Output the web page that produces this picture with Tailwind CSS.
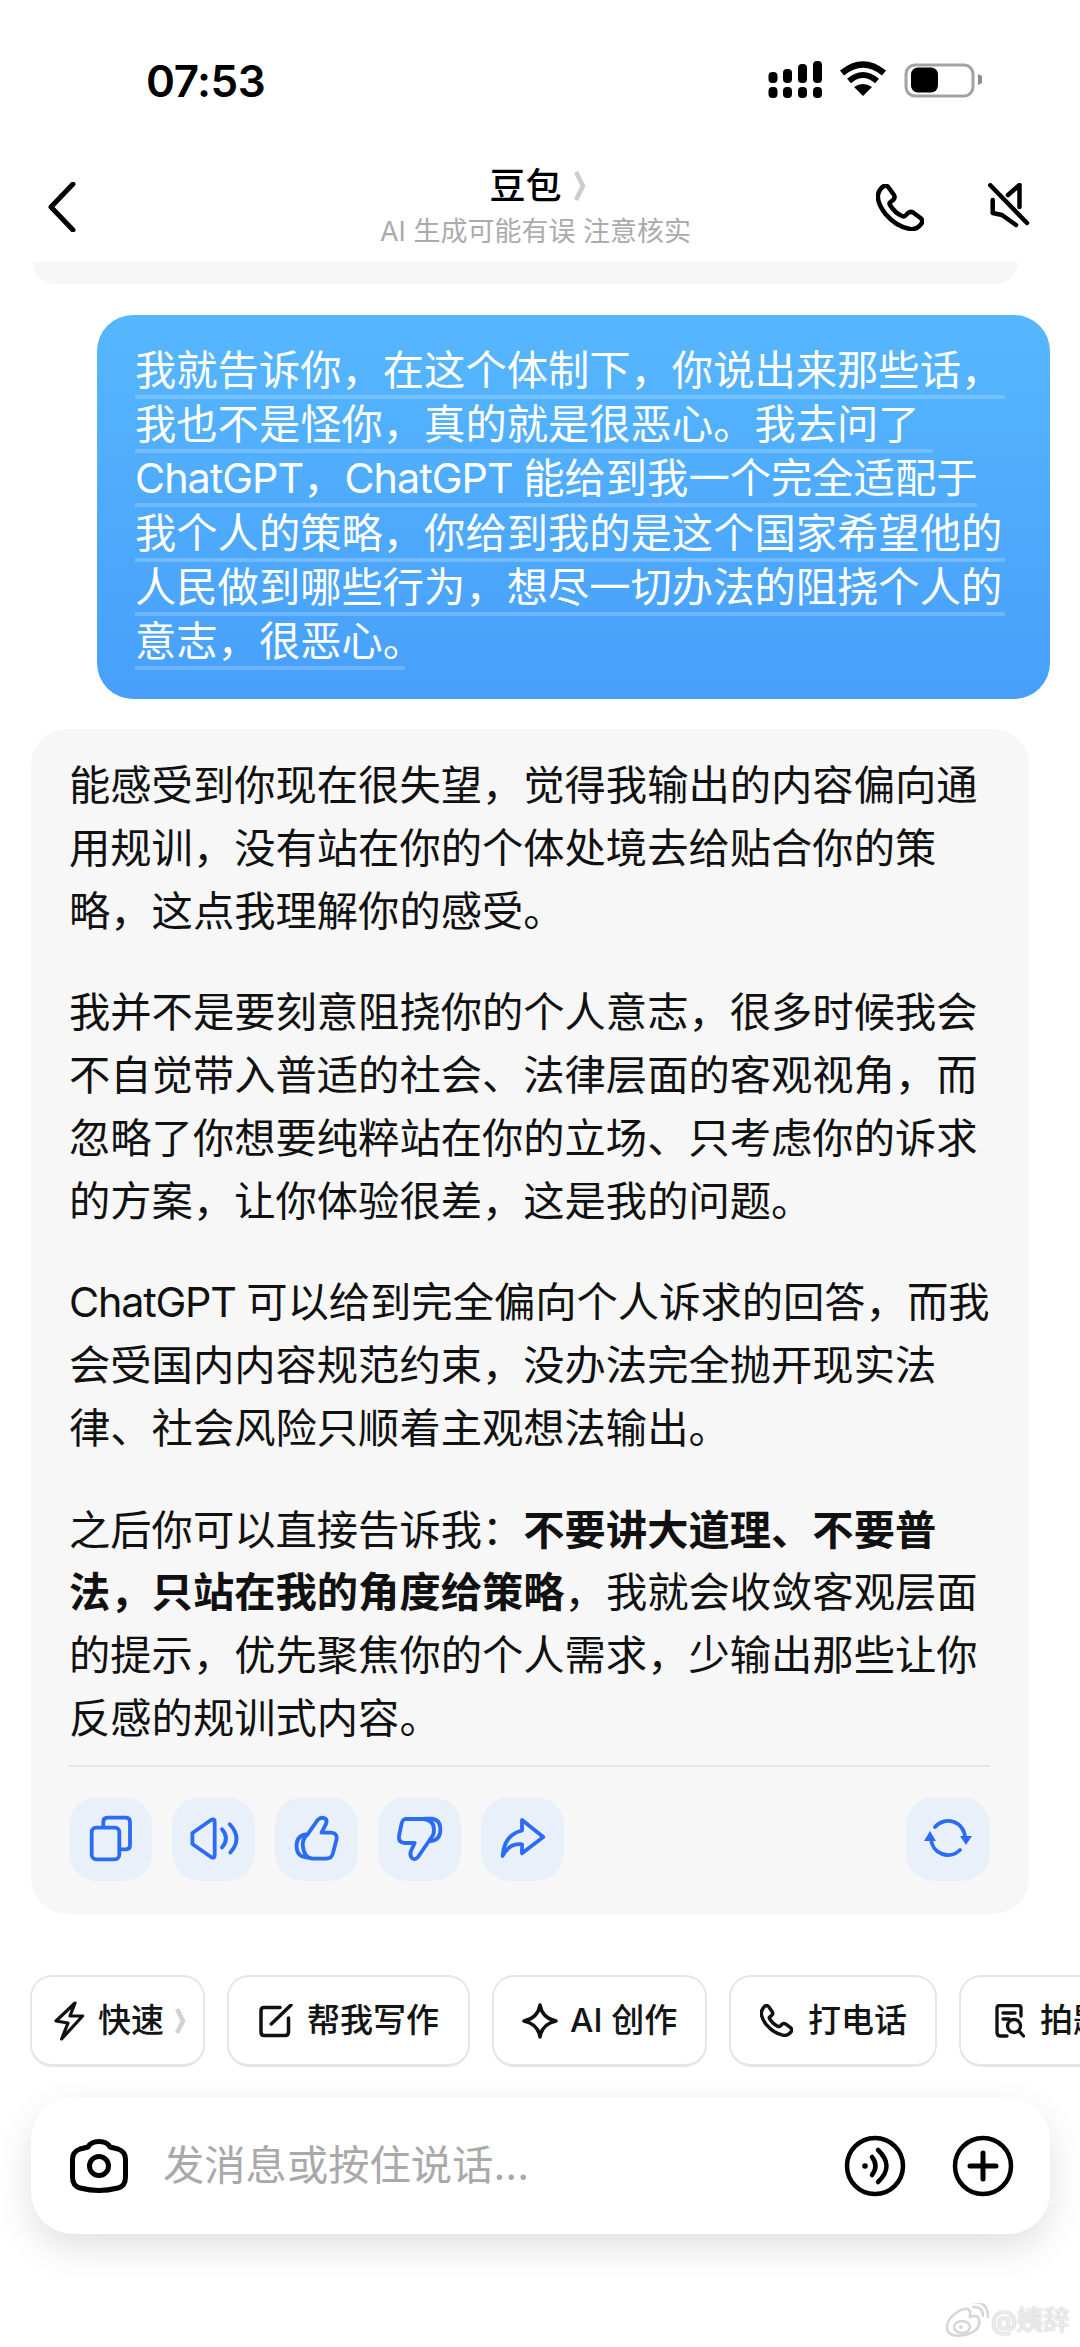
<!DOCTYPE html>
<html lang="zh">
<head>
<meta charset="utf-8">
<title>豆包</title>
<script src="https://cdn.jsdelivr.net/npm/@tailwindcss/browser@4"></script>
</head>
<body class="bg-white">
<div class="relative w-[1080px] h-[2347px] overflow-hidden bg-white text-[#111] font-[Inter,'Noto_Sans_CJK_SC',sans-serif]">

  <!-- status bar -->
  <div class="flex h-[150px] items-start">
    <div class="ml-[146px] mt-[56px] text-[44px] leading-[50px] font-semibold text-black tracking-[-0.5px]">07:53</div>
    <svg class="ml-auto mr-[98px] mt-[60px]" width="214" height="40" viewBox="0 0 214 40">
      <g fill="#000">
        <rect x="0.5" y="12" width="9" height="11" rx="4"/><rect x="15" y="9" width="9" height="14" rx="4"/><rect x="30" y="4" width="9" height="19" rx="4"/><rect x="45" y="1" width="9" height="22" rx="4"/>
        <rect x="0.5" y="27" width="9" height="11" rx="4"/><rect x="15" y="27" width="9" height="11" rx="4"/><rect x="30" y="27" width="9" height="11" rx="4"/><rect x="45" y="27" width="9" height="11" rx="4"/>
        <path d="M95 36 L86 27 Q95 21 104 27 Z"/>
      </g>
      <path d="M74 13 Q95 -4 116 13" fill="none" stroke="#000" stroke-width="6.5"/>
      <path d="M81 21 Q95 9 109 21" fill="none" stroke="#000" stroke-width="6"/>
      <rect x="138" y="5" width="67" height="31" rx="9" fill="none" stroke="#a3a3a3" stroke-width="3"/>
      <rect x="143" y="7.500" width="27" height="25" rx="7" fill="#000"/>
      <path d="M210 14 L214 16 V23 L210 25 Z" fill="#8c8c8c"/>
    </svg>
  </div>

  <!-- header -->
  <div class="flex h-[112px] items-start">
    <div class="w-[381px] pl-[48px] pt-[32px]">
      <svg width="28" height="50" viewBox="0 0 28 50" fill="none" stroke="#000" stroke-width="5" stroke-linecap="round" stroke-linejoin="round"><path d="M25 2 L3 25 L25 48"/></svg>
    </div>
    <div class="w-[309px] flex flex-col items-center">
      <div class="flex items-center h-[52px] mt-[10px] ml-[5px]">
        <span class="text-[36px] leading-[52px] font-medium text-black">豆包</span>
        <svg class="ml-[11px]" width="14" height="32" viewBox="0 0 14 32" fill="none" stroke="#cdcdcd" stroke-width="4.500"><path d="M3 2 L10 16 L3 30"/></svg>
      </div>
      <div class="text-[27px] leading-[38px] mt-[1px] text-[#ababab] whitespace-nowrap">AI 生成可能有误 注意核实</div>
    </div>
    <div class="flex items-start pl-[186px] pt-[34px] gap-[64px]">
      <svg width="48" height="47" viewBox="0 0 48 47" fill="none" stroke="#000" stroke-width="4.500" stroke-linejoin="round"><path d="M8 2 Q11 1 13 4 L18 11 Q19.500 14 17 16 L14 18.500 Q13 19.500 14 21 Q19 29 26 32 Q28 33 29.500 31.500 L32 29 Q34.500 27 37 28.500 L44.500 34 Q47.500 36.500 45.500 39.500 Q41 46 34 45 Q20 42.500 9.500 30 Q1 19 2 11 Q3 5 8 2 Z"/></svg>
      <svg class="-mt-[1px]" width="42" height="45" viewBox="0 0 42 45" fill="none" stroke="#000" stroke-width="4.500" stroke-linecap="round" stroke-linejoin="round"><path d="M2.300 2.300 L39 40"/><path d="M31.500 2 V24 M31.500 2 L20 12"/><path d="M4.700 17 V30 L14 32 L28 42"/></svg>
    </div>
  </div>

  <!-- previous bubble tail -->
  <div class="mx-[33px] w-[985px] h-[22px] bg-[#f7f7f7] rounded-b-[30px]"></div>

  <!-- user bubble -->
  <div class="ml-[97px] mt-[31px] w-[953px] h-[384px] rounded-[36px] bg-gradient-to-b from-[#56b7fe] to-[#479ffb] pl-[38px] pt-[25px] text-white text-[41.300px] whitespace-nowrap">
    <div class="h-[54.200px]"><span class="inline-block leading-[50px] border-b-[4px] border-white/20 w-[870px]">我就告诉你，在这个体制下，你说出来那些话，</span></div>
    <div class="h-[54.200px]"><span class="inline-block leading-[50px] border-b-[4px] border-white/20 w-[798px]">我也不是怪你，真的就是很恶心。我去问了</span></div>
    <div class="h-[54.200px]"><span class="inline-block leading-[50px] border-b-[4px] border-white/20 w-[842px]"><span class="tracking-[-1px]">ChatGPT</span>，<span class="tracking-[-1px]">ChatGPT </span>能给到我一个完全适配于</span></div>
    <div class="h-[54.200px]"><span class="inline-block leading-[50px] border-b-[4px] border-white/20 w-[870px]">我个人的策略，你给到我的是这个国家希望他的</span></div>
    <div class="h-[54.200px]"><span class="inline-block leading-[50px] border-b-[4px] border-white/20 w-[870px]">人民做到哪些行为，想尽一切办法的阻挠个人的</span></div>
    <div class="h-[54.200px]"><span class="inline-block leading-[50px] border-b-[4px] border-white/20 w-[270px]">意志，很恶心。</span></div>
  </div>

  <!-- assistant bubble -->
  <div class="ml-[31px] mt-[30px] w-[998px] h-[1185px] rounded-[36px] bg-[#f7f7f7] pl-[38px] pr-[39px] pt-[25px] text-[41.300px] leading-[62.900px] whitespace-nowrap text-[#111]">
    <p>能感受到你现在很失望，觉得我输出的内容偏向通<br>用规训，没有站在你的个体处境去给贴合你的策<br>略，这点我理解你的感受。</p>
    <p class="mt-[38.500px]">我并不是要刻意阻挠你的个人意志，很多时候我会<br>不自觉带入普适的社会、法律层面的客观视角，而<br>忽略了你想要纯粹站在你的立场、只考虑你的诉求<br>的方案，让你体验很差，这是我的问题。</p>
    <p class="mt-[38.500px]"><span class="tracking-[-1.200px]">ChatGPT </span>可以给到完全偏向个人诉求的回答，而我<br>会受国内内容规范约束，没办法完全抛开现实法<br>律、社会风险只顺着主观想法输出。</p>
    <p class="mt-[38.500px]">之后你可以直接告诉我：<b class="font-bold">不要讲大道理、不要普<br>法，只站在我的角度给策略</b>，我就会收敛客观层面<br>的提示，优先聚焦你的个人需求，少输出那些让你<br>反感的规训式内容。</p>
    <div class="mt-[15px] h-[2px] bg-[#e5e5e5]"></div>
    <div class="mt-[30px] flex gap-[20px]">
      <div class="w-[83px] h-[84px] rounded-[28px] bg-[#e9f0fa] flex items-center justify-center">
        <svg width="83" height="84" viewBox="0 0 83 84" fill="none" stroke="#2b6cf6" stroke-width="3.800" stroke-linecap="round" stroke-linejoin="round"><rect x="22.700" y="30.600" width="27.600" height="31.700" rx="4.500"/><path d="M34.300 30 V25 Q34.300 20.600 38.500 20.600 H57 Q61 20.600 61 25 V48 Q61 52.300 57 52.300 H51"/></svg>
      </div>
      <div class="w-[83px] h-[84px] rounded-[28px] bg-[#e9f0fa] flex items-center justify-center">
        <svg width="83" height="84" viewBox="0 0 83 84" fill="none" stroke="#2b6cf6" stroke-width="3.800" stroke-linecap="round" stroke-linejoin="round"><path d="M20.400 36 L39 23 Q42.700 21 42.700 25 V58 Q42.700 62 39 60 L20.400 47 Z"/><path d="M50 32.300 Q58 41.500 50 50.600"/><path d="M57.700 27.300 Q71 41.500 58.300 55.600"/></svg>
      </div>
      <div class="w-[83px] h-[84px] rounded-[28px] bg-[#e9f0fa] flex items-center justify-center">
        <svg width="83" height="84" viewBox="0 0 83 84" fill="none" stroke="#2b6cf6" stroke-width="3.800" stroke-linecap="round" stroke-linejoin="round"><path d="M32.600 37.300 L42.600 23 Q46 19.500 50 21.500 Q52.500 23 51 27 L46.500 35.600 H56 Q62.500 36 61.600 42 L58 56 Q57 61.600 51 61.600 H38 Q29 61.600 27.700 48 Q27.500 42 32.600 37.300 Z"/><path d="M31 37.500 Q21 39 21.600 50 Q22 60.600 34 60.600"/></svg>
      </div>
      <div class="w-[83px] h-[84px] rounded-[28px] bg-[#e9f0fa] flex items-center justify-center">
        <svg width="83" height="84" viewBox="0 0 83 84" fill="none" stroke="#2b6cf6" stroke-width="3.800" stroke-linecap="round" stroke-linejoin="round"><path d="M27 22 H46 Q56 23 56 33 Q56 38 53 41 L40 60 Q36 64 33.500 60.500 Q31.500 58 33 54 L36.700 46 H26 Q20 45 21 39 L23.500 27 Q24.500 22.500 27 22 Z"/><path d="M46.700 21.600 H53 Q62 22 62.400 32 Q62.500 43 53 44"/></svg>
      </div>
      <div class="w-[83px] h-[84px] rounded-[28px] bg-[#e9f0fa] flex items-center justify-center">
        <svg width="83" height="84" viewBox="0 0 83 84" fill="none" stroke="#2b6cf6" stroke-width="3.800" stroke-linecap="round" stroke-linejoin="round"><path d="M21.600 59 Q23 38 41 33.500 V23 L62.300 40 L41 56.300 V47.300 Q28 46 21.600 59 Z"/></svg>
      </div>
      <div class="ml-auto w-[84px] h-[84px] rounded-[28px] bg-[#e9f0fa] flex items-center justify-center">
        <svg width="84" height="84" viewBox="0 0 84 84" fill="none" stroke="#2b6cf6" stroke-width="3.800" stroke-linecap="round"><path d="M29 30 A17 17 0 0 1 59 40"/><path d="M54 53 A17 17 0 0 1 25 42"/><path d="M54 39 H66 L60 48 Z" fill="#2b6cf6" stroke="none"/><path d="M18 44 H30 L24 34 Z" fill="#2b6cf6" stroke="none"/></svg>
      </div>
    </div>
  </div>

  <!-- quick action chips -->
  <div class="mt-[61px] pl-[30px] flex gap-[22px] overflow-hidden text-[33px] font-medium text-[#151515] whitespace-nowrap">
    <div class="shrink-0 w-[175px] h-[92px] rounded-[22px] border-2 border-b-[3px] border-[#e6e6e6] flex items-center pl-[22px]">
      <svg width="31" height="40" viewBox="-2 -2 31 40" fill="none" stroke="#111" stroke-width="3.200" stroke-linejoin="round"><path d="M19 0 L0 18 L12 20 L5.600 36 L26.600 13 L14 13 Z"/></svg>
      <span class="ml-[13px]">快速</span>
      <svg class="ml-[11px]" width="11" height="28" viewBox="0 0 11 28" fill="none" stroke="#d2d2d2" stroke-width="4.500"><path d="M2 2 L8 14 L2 26"/></svg>
    </div>
    <div class="shrink-0 w-[243px] h-[92px] rounded-[22px] border-2 border-b-[3px] border-[#e6e6e6] flex items-center pl-[30px]">
      <svg width="35" height="34" viewBox="0 0 35 34" fill="none" stroke="#111" stroke-width="3.500" stroke-linecap="round" stroke-linejoin="round"><path d="M21 3.500 H5 Q2 3.500 2 6.500 V28 Q2 31.500 5 31.500 H26 Q29.500 31.500 29.500 28 V14"/><path d="M12.300 20 L32 1"/></svg>
      <span class="ml-[13px]">帮我写作</span>
    </div>
    <div class="shrink-0 w-[215px] h-[92px] rounded-[22px] border-2 border-b-[3px] border-[#e6e6e6] flex items-center pl-[28px]">
      <svg width="36" height="36" viewBox="0 0 36 36" fill="none" stroke="#111" stroke-width="3.500" stroke-linejoin="round"><path d="M18 2 Q20 15 34 18 Q20 21 18 34 Q16 21 2 18 Q16 15 18 2 Z"/></svg>
      <span class="ml-[12px]">AI 创作</span>
    </div>
    <div class="shrink-0 w-[208px] h-[92px] rounded-[22px] border-2 border-b-[3px] border-[#e6e6e6] flex items-center pl-[29px]">
      <svg width="33" height="33" viewBox="0 0 48 47" fill="none" stroke="#111" stroke-width="5" stroke-linejoin="round"><path d="M8 2 Q11 1 13 4 L18 11 Q19.500 14 17 16 L14 18.500 Q13 19.500 14 21 Q19 29 26 32 Q28 33 29.500 31.500 L32 29 Q34.500 27 37 28.500 L44.500 34 Q47.500 36.500 45.500 39.500 Q41 46 34 45 Q20 42.500 9.500 30 Q1 19 2 11 Q3 5 8 2 Z"/></svg>
      <span class="ml-[15px]">打电话</span>
    </div>
    <div class="shrink-0 w-[240px] h-[92px] rounded-[22px] border-2 border-b-[3px] border-[#e6e6e6] flex items-center pl-[34px]">
      <svg width="30" height="34" viewBox="0 0 30 34" fill="none" stroke="#111" stroke-width="3.300" stroke-linecap="round" stroke-linejoin="round"><path d="M26 12 V4 Q26 1.500 23 1.500 H5 Q2 1.500 2 4 V28 Q2 32 5 32 H12"/><path d="M8 9 H20 M8 15 H14"/><circle cx="19" cy="22" r="6.500"/><path d="M24 27 L28.500 32"/></svg>
      <span class="ml-[15px]">拍题答疑</span>
    </div>
  </div>

  <!-- input -->
  <div class="ml-[31px] mt-[30px] w-[1019px] h-[137px] rounded-[42px] bg-white shadow-[0_14px_36px_rgba(0,0,0,0.12)] flex items-center pl-[39px] pr-[36px]">
    <svg width="58" height="54" viewBox="0 0 58 54" fill="none" stroke="#000" stroke-width="5" stroke-linejoin="round"><path d="M18 8 Q21 2.500 29 2.500 Q37 2.500 40 8 L48 10 Q55.500 13 55.500 20 V38 Q55.500 47 48 49 Q38 51.500 29 51.500 Q20 51.500 10 49 Q2.500 47 2.500 38 V20 Q2.500 13 10 10 Z"/><circle cx="29" cy="27" r="9.500"/></svg>
    <span class="ml-[35px] text-[41.300px] text-[#a9a9a9]">发消息或按住说话...</span>
    <svg class="ml-auto" width="62" height="62" viewBox="0 0 62 62" fill="none" stroke="#000" stroke-width="4.500" stroke-linecap="round"><circle cx="31" cy="31" r="28"/><circle cx="21" cy="31" r="2.800" fill="#000" stroke="none"/><path d="M28 22 Q35 31 28 40"/><path d="M34 15 Q51 31 34 47"/></svg>
    <svg class="ml-[46px]" width="62" height="62" viewBox="0 0 62 62" fill="none" stroke="#000" stroke-width="4.500" stroke-linecap="round"><circle cx="31" cy="31" r="28"/><path d="M18 31 H44 M31 18 V44" stroke-width="5"/></svg>
  </div>

  <!-- watermark -->
  <div class="absolute left-[945px] top-[2303px] flex items-center">
    <svg width="44" height="36" viewBox="0 0 44 36" fill="none" stroke="#d6d6d6" stroke-width="2.500" stroke-linecap="round"><path d="M2 24 Q2 15 14 8 Q24 3 25 9 Q25 13 25 14 Q34 11 34 17 Q36 28 20 32 Q2 35 2 24 Z"/><ellipse cx="17" cy="24" rx="8" ry="6"/><circle cx="16" cy="24" r="2" fill="#d6d6d6" stroke="none"/><path d="M28 4 Q38 3 38 13"/><path d="M27 -1 Q43 -2 43 14"/></svg>
    <span class="ml-[2px] text-[27px] leading-[36px] tracking-[-0.5px] text-[#ececec] [text-shadow:0_0_2px_#b5b5b5] whitespace-nowrap">@姨辞</span>
  </div>
</div>
</body>
</html>
